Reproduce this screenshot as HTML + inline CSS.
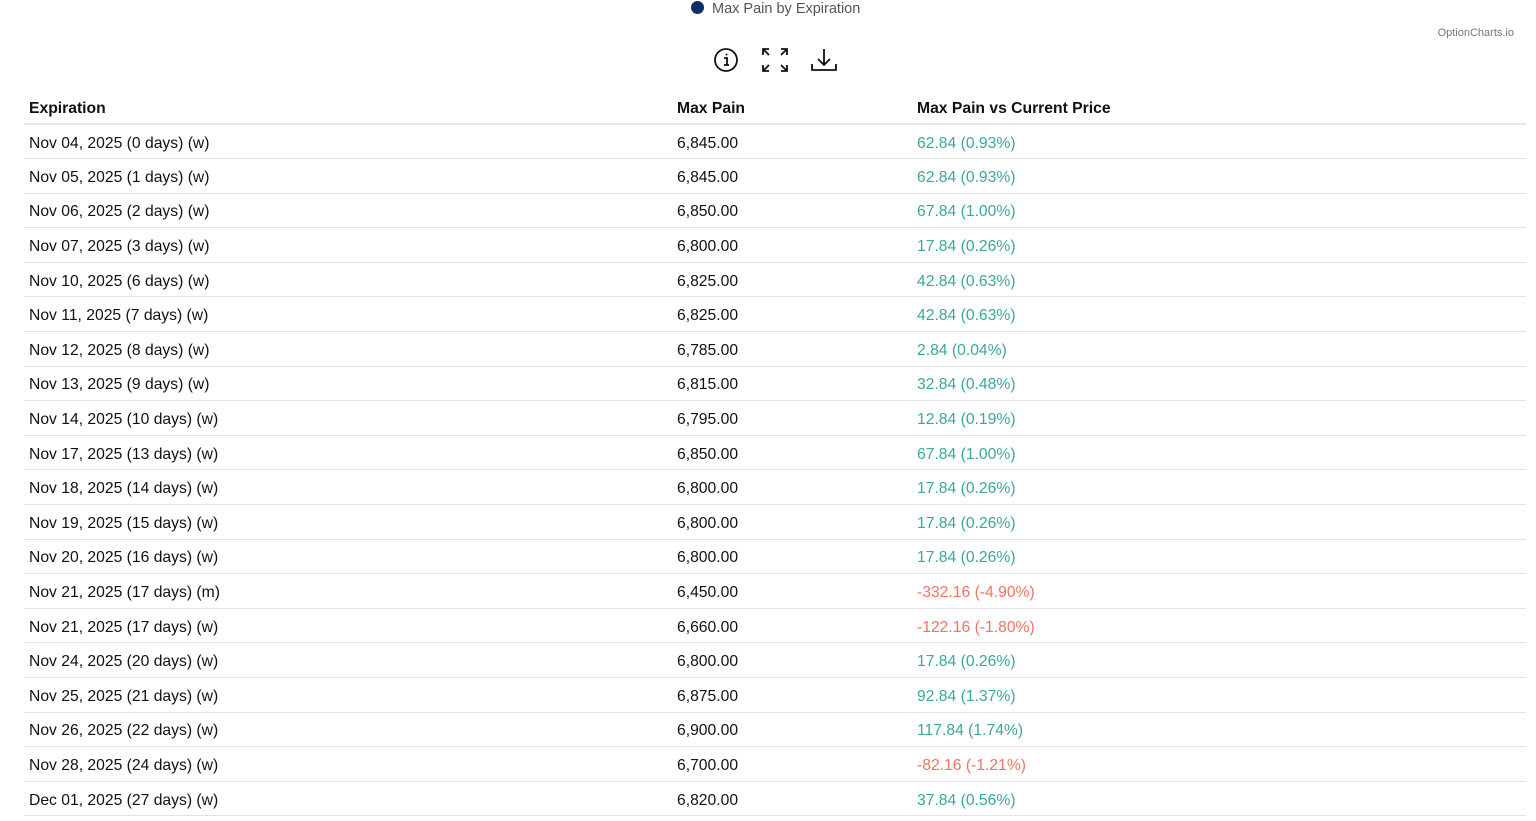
<!DOCTYPE html>
<html><head><meta charset="utf-8"><style>
body{margin:0;width:1536px;height:821px;background:#fff;font-family:"Liberation Sans",sans-serif;color:#111;overflow:hidden;position:relative}
.legend{position:absolute;left:691px;top:1px;font-size:14.5px;color:#555;line-height:16px}
.legend i{display:inline-block;width:13px;height:13px;border-radius:50%;background:#0f2d6b;margin-right:8px;vertical-align:-1px}
.brand{position:absolute;right:22px;top:27px;font-size:11px;color:#777}
.icons{position:absolute;top:46px;left:712px}
table{position:absolute;left:24px;top:91px;width:1502px;border-collapse:collapse;font-size:15.7px}
th{text-align:left;font-weight:bold;height:33px;padding:4px 5px 0;border-bottom:2px solid #e6e6e6;box-sizing:border-box}
td{height:34.6px;padding:4px 5px 0;border-bottom:1px solid #e2e2e2;box-sizing:border-box}
.g{color:#3aa89a}.r{color:#f07363}
</style></head><body>
<div class="legend"><i></i>Max Pain by Expiration</div>
<div class="brand">OptionCharts.io</div>
<svg class="icons" width="130" height="30" viewBox="0 0 130 30" fill="none" stroke="#111" stroke-width="1.8">
<circle cx="14" cy="14" r="11"/><circle cx="14.5" cy="8.5" r="1" fill="#111" stroke="none"/><path d="M12 12h3v7M12 19h5"/>
<path d="M51 9V3h6M51 3l6 6M75 9V3h-6M75 3l-6 6M51 19v6h6M51 25l6-6M75 19v6h-6M75 25l-6-6"/>
<path d="M112 3v16M106 13l6 6 6-6M100 18v6h24v-6"/>
</svg>
<table>
<tr><th style="width:648px">Expiration</th><th style="width:240px">Max Pain</th><th>Max Pain vs Current Price</th></tr>
<tr><td>Nov 04, 2025 (0 days) (w)</td><td>6,845.00</td><td class="g">62.84 (0.93%)</td></tr>
<tr><td>Nov 05, 2025 (1 days) (w)</td><td>6,845.00</td><td class="g">62.84 (0.93%)</td></tr>
<tr><td>Nov 06, 2025 (2 days) (w)</td><td>6,850.00</td><td class="g">67.84 (1.00%)</td></tr>
<tr><td>Nov 07, 2025 (3 days) (w)</td><td>6,800.00</td><td class="g">17.84 (0.26%)</td></tr>
<tr><td>Nov 10, 2025 (6 days) (w)</td><td>6,825.00</td><td class="g">42.84 (0.63%)</td></tr>
<tr><td>Nov 11, 2025 (7 days) (w)</td><td>6,825.00</td><td class="g">42.84 (0.63%)</td></tr>
<tr><td>Nov 12, 2025 (8 days) (w)</td><td>6,785.00</td><td class="g">2.84 (0.04%)</td></tr>
<tr><td>Nov 13, 2025 (9 days) (w)</td><td>6,815.00</td><td class="g">32.84 (0.48%)</td></tr>
<tr><td>Nov 14, 2025 (10 days) (w)</td><td>6,795.00</td><td class="g">12.84 (0.19%)</td></tr>
<tr><td>Nov 17, 2025 (13 days) (w)</td><td>6,850.00</td><td class="g">67.84 (1.00%)</td></tr>
<tr><td>Nov 18, 2025 (14 days) (w)</td><td>6,800.00</td><td class="g">17.84 (0.26%)</td></tr>
<tr><td>Nov 19, 2025 (15 days) (w)</td><td>6,800.00</td><td class="g">17.84 (0.26%)</td></tr>
<tr><td>Nov 20, 2025 (16 days) (w)</td><td>6,800.00</td><td class="g">17.84 (0.26%)</td></tr>
<tr><td>Nov 21, 2025 (17 days) (m)</td><td>6,450.00</td><td class="r">-332.16 (-4.90%)</td></tr>
<tr><td>Nov 21, 2025 (17 days) (w)</td><td>6,660.00</td><td class="r">-122.16 (-1.80%)</td></tr>
<tr><td>Nov 24, 2025 (20 days) (w)</td><td>6,800.00</td><td class="g">17.84 (0.26%)</td></tr>
<tr><td>Nov 25, 2025 (21 days) (w)</td><td>6,875.00</td><td class="g">92.84 (1.37%)</td></tr>
<tr><td>Nov 26, 2025 (22 days) (w)</td><td>6,900.00</td><td class="g">117.84 (1.74%)</td></tr>
<tr><td>Nov 28, 2025 (24 days) (w)</td><td>6,700.00</td><td class="r">-82.16 (-1.21%)</td></tr>
<tr><td>Dec 01, 2025 (27 days) (w)</td><td>6,820.00</td><td class="g">37.84 (0.56%)</td></tr>
</table>
</body></html>
